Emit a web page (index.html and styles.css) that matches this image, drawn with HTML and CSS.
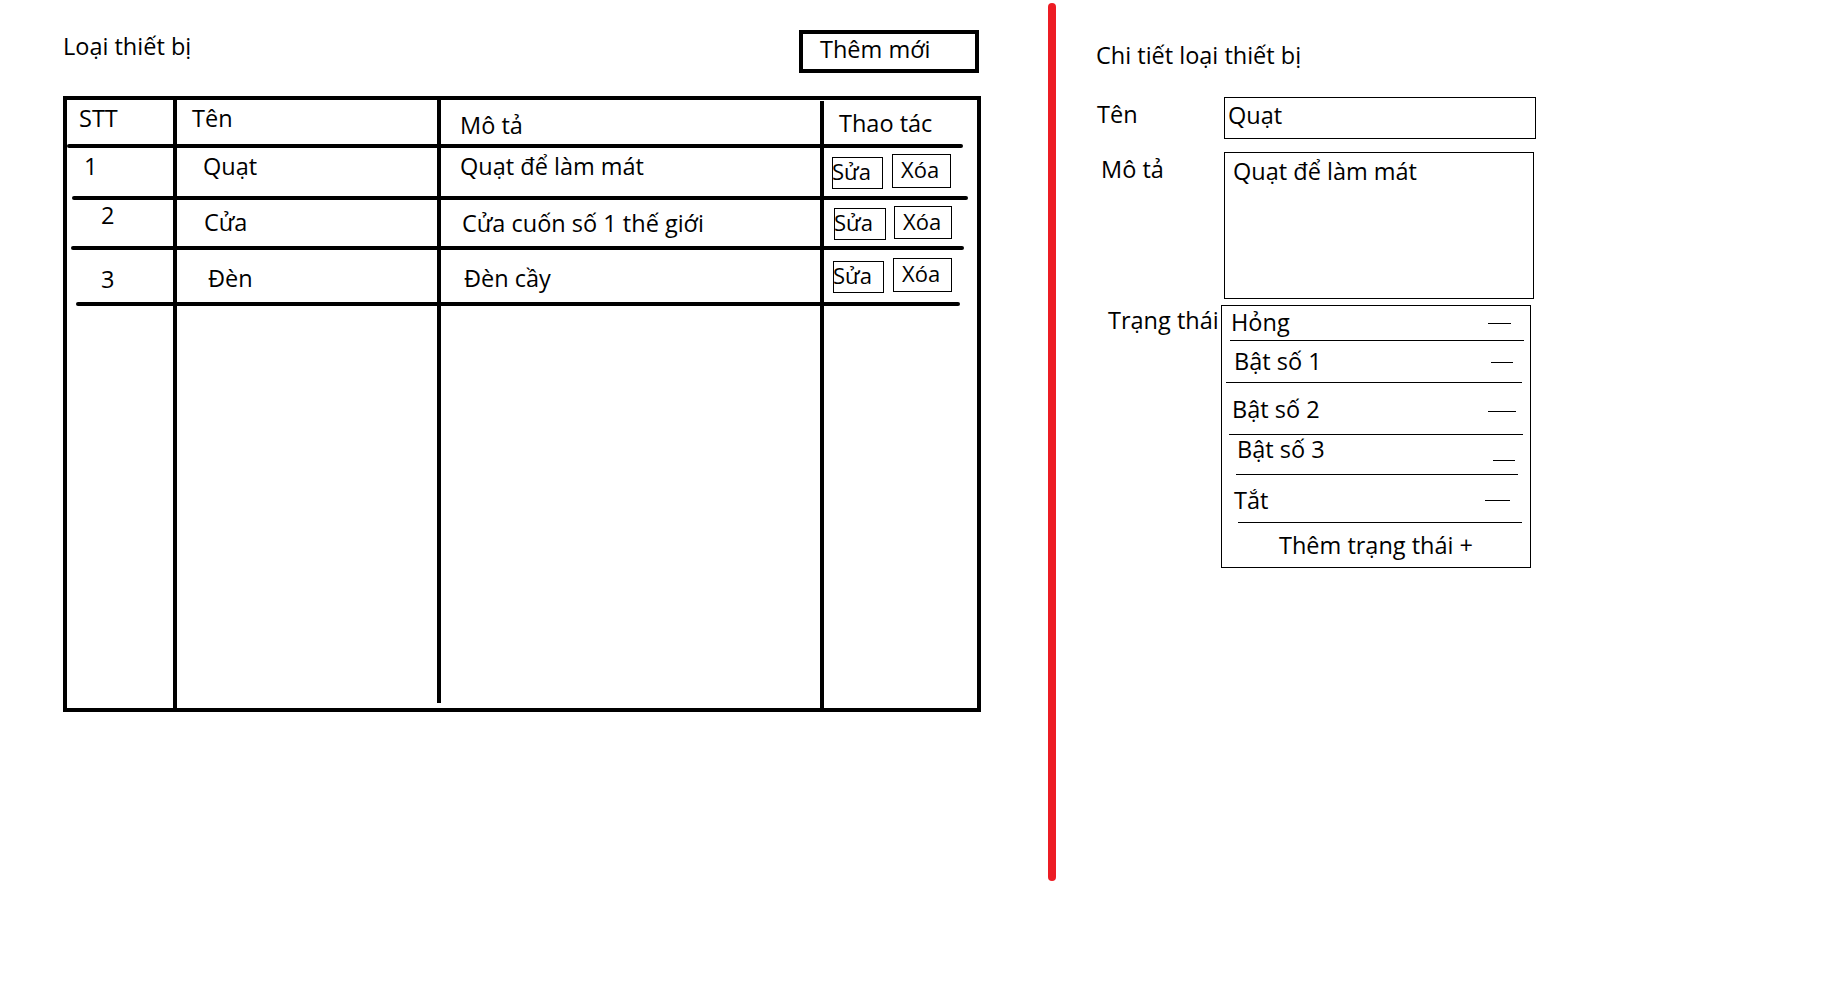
FILE: index.html
```html
<!DOCTYPE html>
<html>
<head>
    <title>Loại thiết bị</title>
    <link rel="stylesheet" href="styles.css">
</head>
<body>
    <div class="list-panel">
        <div class="list-head">
            <div class="page-title">Loại thiết bị</div>
            <div class="add-button">Thêm mới</div>
        </div>

        <div class="grid">
            <div class="vl vl1"></div>
            <div class="vl vl2"></div>
            <div class="vl vl3"></div>

            <div class="cell c1 r0 h-stt">STT</div>
            <div class="cell c2 r0 h-name">Tên</div>
            <div class="cell c3 r0 h-desc">Mô tả</div>
            <div class="cell c4 r0 h-act">Thao tác</div>
            <div class="hl hl0"></div>

            <div class="cell c1 r1 n1">1</div>
            <div class="cell c2 r1 t1">Quạt</div>
            <div class="cell c3 r1 d1">Quạt để làm mát</div>
            <div class="cell c4 r1 act">
                <span class="btn-edit e1">Sửa</span>
                <span class="btn-del x1">Xóa</span>
            </div>
            <div class="hl hl1"></div>

            <div class="cell c1 r2 n2">2</div>
            <div class="cell c2 r2 t2">Cửa</div>
            <div class="cell c3 r2 d2">Cửa cuốn số 1 thế giới</div>
            <div class="cell c4 r2 act">
                <span class="btn-edit e2">Sửa</span>
                <span class="btn-del x2">Xóa</span>
            </div>
            <div class="hl hl2"></div>

            <div class="cell c1 r3 n3">3</div>
            <div class="cell c2 r3 t3">Đèn</div>
            <div class="cell c3 r3 d3">Đèn cầy</div>
            <div class="cell c4 r3 act">
                <span class="btn-edit e3">Sửa</span>
                <span class="btn-del x3">Xóa</span>
            </div>
            <div class="hl hl3"></div>
        </div>
    </div>

    <div class="divider"></div>

    <div class="detail-panel">
        <div class="page-title">Chi tiết loại thiết bị</div>

        <div class="field field-name">
            <div class="field-label lbl-name">Tên</div>
            <div class="input-box">Quạt</div>
        </div>

        <div class="field field-desc">
            <div class="field-label lbl-desc">Mô tả</div>
            <div class="area-box">Quạt để làm mát</div>
        </div>

        <div class="field field-state">
            <div class="field-label lbl-state">Trạng thái</div>
            <div class="state-box">
                <div class="state s1"><span>Hỏng</span><div class="dash"></div></div>
                <div class="state s2"><span>Bật số 1</span><div class="dash"></div></div>
                <div class="state s3"><span>Bật số 2</span><div class="dash"></div></div>
                <div class="state s4"><span>Bật số 3</span><div class="dash"></div></div>
                <div class="state s5"><span>Tắt</span><div class="dash"></div></div>
                <div class="add-state">Thêm trạng thái +</div>
            </div>
        </div>
    </div>
</body>
</html>
```

FILE: styles.css
```css
body {
    margin: 0;
    background: #fff;
    color: #000;
    font-family: "Open Sans", "Noto Sans", sans-serif;
    font-size: 23.5px;
    line-height: 31px;
    display: flex;
    align-items: flex-start;
}

/* left: list */

.list-panel {
    margin-left: 63px;
    width: 918px;
}

.list-head {
    display: flex;
    justify-content: space-between;
    align-items: flex-start;
    padding-top: 30px;
}

.list-head .page-title {
    margin-top: 1px;
}

.add-button {
    width: 180px;
    height: 43px;
    box-sizing: border-box;
    border: 4px solid #000;
    padding-left: 17px;
    margin-right: 2px;
}

.grid {
    margin-top: 23px;
    display: grid;
    border: 4px solid #000;
    grid-template-columns: 106px 4px 260px 4px 379px 4px 153px;
    grid-template-rows: 44px 4px 48px 4px 46px 4px 52px 4px 402px;
}

.vl {
    grid-row: 1 / -1;
    background: #000;
}

.vl1 { grid-column: 2; }
.vl2 { grid-column: 4; margin-bottom: 5px; }
.vl3 { grid-column: 6; margin-top: 1px; }

.hl {
    grid-column: 1 / -1;
    background: #000;
    border-radius: 2px;
}

.hl0 { grid-row: 2; margin-right: 14px; }
.hl1 { grid-row: 4; margin-left: 5px; margin-right: 9px; }
.hl2 { grid-row: 6; margin-left: 4px; margin-right: 13px; }
.hl3 { grid-row: 8; margin-left: 9px; margin-right: 17px; }

.cell {
    white-space: nowrap;
}

.c1 { grid-column: 1; }
.c2 { grid-column: 3; }
.c3 { grid-column: 5; }
.c4 { grid-column: 7; }
.r0 { grid-row: 1; }
.r1 { grid-row: 3; }
.r2 { grid-row: 5; }
.r3 { grid-row: 7; }

.h-stt { padding: 3px 0 0 12px; }
.h-name { padding: 3px 0 0 15px; }
.h-desc { padding: 10px 0 0 19px; }
.h-act { padding: 8px 0 0 15px; }

.n1 { padding: 3px 0 0 17px; }
.t1 { padding: 3px 0 0 26px; }
.d1 { padding: 3px 0 0 19px; }

.n2 { padding: 0 0 0 34px; }
.t2 { padding: 7px 0 0 27px; }
.d2 { padding: 8px 0 0 21px; }

.n3 { padding: 14px 0 0 34px; }
.t3 { padding: 13px 0 0 31px; }
.d3 { padding: 13px 0 0 23px; }

.act {
    display: flex;
    align-items: flex-start;
}

.btn-edit,
.btn-del {
    box-sizing: border-box;
    border: 1px solid #000;
    font-size: 22px;
    line-height: 27px;
    height: 32px;
    white-space: nowrap;
}

.btn-edit {
    width: 51px;
    text-indent: -1px;
}

.btn-del {
    width: 59px;
    height: 34px;
    padding: 1px 0 0 8px;
}

.e1 { margin: 9px 0 0 8px; }
.x1 { margin: 6px 0 0 9px; }
.e2 { margin: 8px 0 0 10px; width: 52px; }
.x2 { margin: 6px 0 0 8px; width: 58px; height: 33px; }
.e3 { margin: 11px 0 0 9px; }
.x3 { margin: 8px 0 0 9px; }

/* divider */

.divider {
    flex: none;
    width: 8px;
    height: 878px;
    margin: 3px 0 0 67px;
    background: #ed1c24;
    border-radius: 4px;
}

/* right: detail */

.detail-panel {
    padding: 40px 0 0 40px;
}

.field {
    display: flex;
    align-items: flex-start;
}

.field-label {
    width: 128px;
    flex: none;
    white-space: nowrap;
}

.field-name { margin-top: 26px; }
.field-desc { margin-top: 13px; }
.field-state { margin-top: 6px; }

.lbl-name { padding: 2px 0 0 1px; box-sizing: border-box; }
.lbl-desc { padding: 2px 0 0 5px; box-sizing: border-box; }
.lbl-state { padding: 0 0 0 12px; box-sizing: border-box; }

.input-box {
    width: 312px;
    height: 42px;
    box-sizing: border-box;
    border: 1px solid #000;
    padding: 2px 0 0 3px;
}

.area-box {
    width: 310px;
    height: 147px;
    box-sizing: border-box;
    border: 1px solid #000;
    padding: 3px 0 0 8px;
}

.state-box {
    width: 310px;
    box-sizing: border-box;
    border: 1px solid #000;
    margin-left: -3px;
}

.state {
    display: flex;
    align-items: flex-start;
    border-bottom: 1px solid #000;
}

.state span {
    white-space: nowrap;
}

.dash {
    margin-left: auto;
    border-top: 1px solid #000;
}

.s1 { margin: 0 6px 0 8px; padding: 1px 0 2px 1px; }
.s1 .dash { width: 23px; margin-top: 16px; margin-right: 13px; }

.s2 { margin: 0 8px 0 4px; padding: 5px 0 5px 8px; }
.s2 .dash { width: 22px; margin-top: 16px; margin-right: 9px; }

.s3 { margin: 0 7px 0 7px; padding: 11px 0 9px 3px; }
.s3 .dash { width: 28px; margin-top: 17px; margin-right: 7px; }

.s4 { margin: 0 12px 0 14px; padding: 1px 0 12px 1px; line-height: 26px; }
.s4 .dash { width: 22px; margin-top: 24px; margin-right: 3px; }

.s5 { margin: 0 8px 0 16px; padding: 10px 0 6px 0; }
.s5 span { margin-left: -4px; }
.s5 .dash { width: 25px; margin-top: 15px; margin-right: 12px; }

.add-state {
    text-align: center;
    padding: 7px 0 6px 0;
}
```
